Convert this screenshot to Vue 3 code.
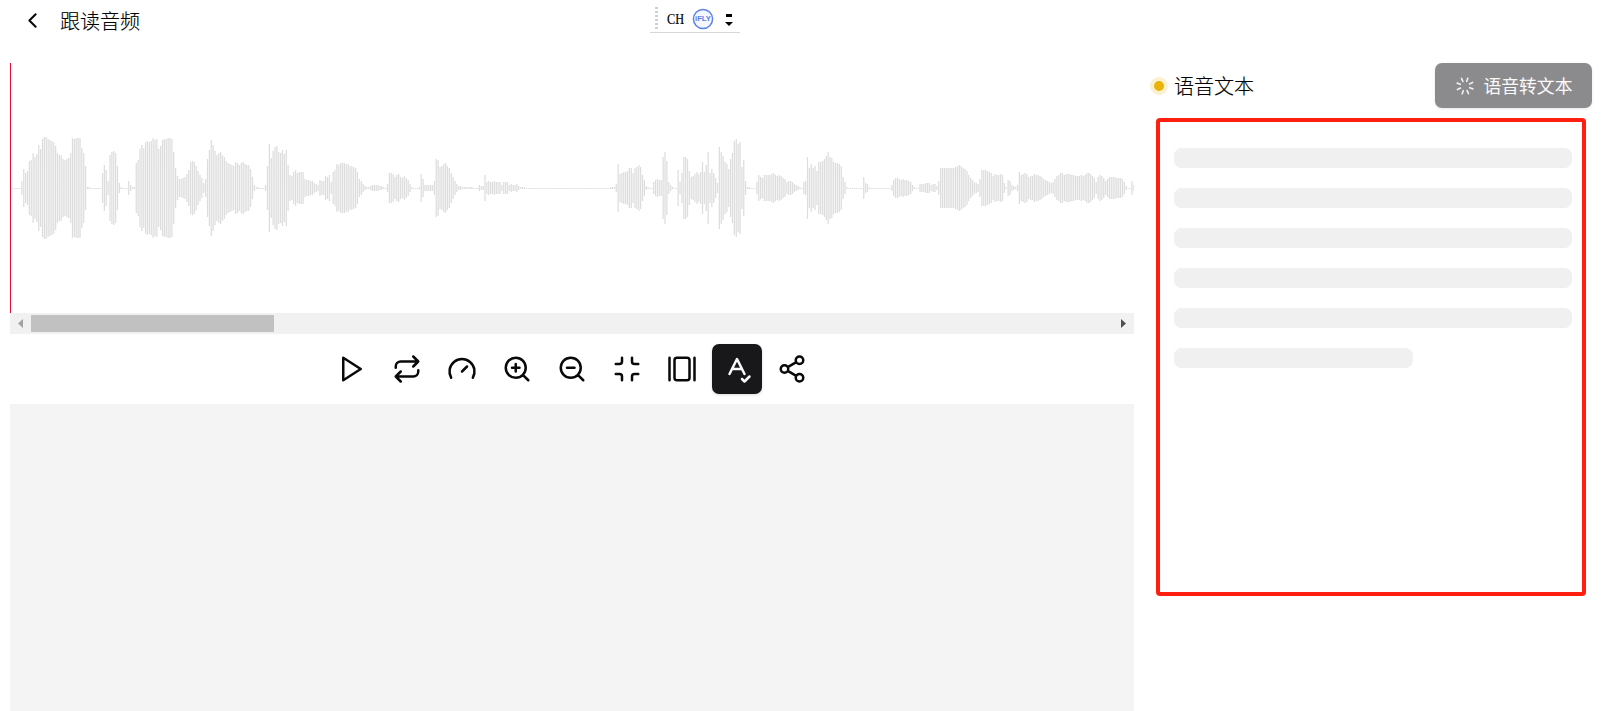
<script setup>
const PITCH = 1.875
const ORIGIN = 10

// Each run: page x of its first bar, then half-heights of successive bars.
const runs = [
  [21.25, [7,19,15,17,27,28,35,31,34,43,39,49,51,51,49,48,47,46,42,35,33,33,29,28,29,30,35,50,49,50,50,50,40,35,22,1,1]],
  [101.875, [15,23,18,7,33,36,37,35,22,5,1]],
  [128.125, [7,3,1,1]],
  [135.625, [25,28,39,43,40,46,47,46,47,50,48,49,39,42,48,49,49,50,50,49,36,20,12,9,9,10,11,14,18,26,27,26,22,17,13,10,5,9,29,38,48,43,37,33,35,36,33,31,27,25,24,23,22,26,25,23,25,26,24,23,23,19,11,3,1,1,0,0,0,3,22,44,30,37,41,42,36,35,38,34,38,23]],
  [289.375, [13,12,16,18,15,16,16,16,9,8,8,7,7,5,4,3,8,7,7,12,11,13,6,16,18,24,23,25,25,25,24,24,22,22,21,20,16,9,7,4,2,1,1,2,3,3,3,3,2,2,1,0,4,15,15,14,11,13,14,11,10,12,10,8,4,1,0,0,0,1,14,9,3,3,3,3,3,7,29,28,21,22,24,25,22,20,15,11,7,4,2,2,1,1,1,1,1,1,0,0,0,3,2,2,13,6,7,6,6,7,6,6,6,3,6,6,6,3,4,3,3,4,2,1,1,1]],
  [610, [1,1,1,4,24,14,15,16,16,17,20,20,15,20,21,23,21,13,8,2,1,0,0,6,8,9,8,8,31,36,27,6,3,1,0,0,18,6,15,31,31,29,17,11,12,14,16,14,16,26,16,23,36,15,19,15,10,5,41,36,32,26,24,19,29,35,47,49,44,46,21,28,7,1,1,0,0,0,6,13,11,10,13,13,13,13,14,15,13,12,13,12,10,9,6,7,7,6,4,3,2,1,0,6,7,31,20,24,20,22,17,26,26,27,29,32,36,31,30,26,25,25,24,22,11,6,1]],
  [863.125, [11,5,4,1]],
  [891.25, [3,8,10,10,9,8,9,8,8,7,6,3,1,0,0,4,4,4,5,5,5,3,4,4,2,7,20,20,20,20,20,20,20,20,21,22,23,22,20,19,17,13,10,8,6,5,4,9,18,18,18,17,16,15,12,14,13,13,14,13,5,1,8,7,3,2,1,3,16,13,14,15,14,11,12,12,14,13,13,12,11,9,8,7,6,5,6,9,12,13,15,15,13,14,14,14,13,13,12,12,12,13,12,13,15,15,14,12,10,6,11,13,12,10,7,9,11,11,11,11,10,10,10,9,6,2,0,0,7,3]],
]

const heights = new Array(600).fill(0)
for (const [x, list] of runs) {
  const first = Math.round((x - ORIGIN) / PITCH)
  list.forEach((h, i) => {
    if (first + i < 600) heights[first + i] = h
  })
}
const wavePath = heights
  .map((h, i) => {
    const top = 125 - h
    const height = h ? h * 2 : 1
    return `M${i * PITCH} ${top}h1.25v${height}h-1.25z`
  })
  .join('')

const tools = [
  { name: 'play', d: 'M5 3l14 9-14 9z' },
  { name: 'repeat', d: 'm17 2 4 4-4 4M3 11v-1a4 4 0 0 1 4-4h14M7 22l-4-4 4-4M21 13v1a4 4 0 0 1-4 4H3' },
  { name: 'speed', d: 'm12 14 4-4M3.34 19a10 10 0 1 1 17.32 0' },
  { name: 'zoom-in', d: 'M3 11a8 8 0 1 0 16 0a8 8 0 1 0-16 0M21 21l-4.35-4.35M11 8v6M8 11h6' },
  { name: 'zoom-out', d: 'M3 11a8 8 0 1 0 16 0a8 8 0 1 0-16 0M21 21l-4.35-4.35M8 11h6' },
  { name: 'minimize', d: 'M8 3v3a2 2 0 0 1-2 2H3M21 8h-3a2 2 0 0 1-2-2V3M3 16h3a2 2 0 0 1 2 2v3M16 21v-3a2 2 0 0 1 2-2h3' },
  { name: 'gallery', d: 'M2 3v18M22 3v18M8 3h8a2 2 0 0 1 2 2v14a2 2 0 0 1-2 2H8a2 2 0 0 1-2-2V5a2 2 0 0 1 2-2z' },
  { name: 'spell-check', active: true, d: 'm6 16 6-12 6 12M8 12h8M16 20l2 2 4-4' },
  { name: 'share', d: 'M15 5a3 3 0 1 0 6 0a3 3 0 1 0-6 0M3 12a3 3 0 1 0 6 0a3 3 0 1 0-6 0M15 19a3 3 0 1 0 6 0a3 3 0 1 0-6 0M8.59 13.51l6.83 3.98M15.41 6.51l-6.82 3.98' },
]
</script>

<template>
  <div class="page">
    <header class="header">
      <svg class="back" viewBox="0 0 24 24"><path d="m15 18-6-6 6-6" /></svg>
      <h1 class="title">跟读音频</h1>
    </header>

    <div class="ime">
      <span class="grip"></span>
      <svg class="lang" viewBox="0 0 21 22"><text x="2" y="15.5" textLength="17" lengthAdjust="spacingAndGlyphs">CH</text></svg>
      <svg class="fly" viewBox="0 0 22 22">
        <circle cx="11" cy="11" r="9.6" />
        <text x="11" y="13.4" text-anchor="middle" textLength="16" lengthAdjust="spacingAndGlyphs">iFLY</text>
      </svg>
      <svg class="menu" viewBox="0 0 8 16"><path d="M1 2h6v3H1zM0 10h8l-4 4z" /></svg>
    </div>

    <main class="main">
      <section class="left">
        <div class="wave">
          <svg class="bars" viewBox="0 0 1124 250"><path :d="wavePath" /></svg>
        </div>
        <div class="scrollbar">
          <svg class="arrow prev" viewBox="0 0 5 9"><path d="M5 0v9L0 4.5z" /></svg>
          <span class="track"><span class="thumb"></span></span>
          <svg class="arrow next" viewBox="0 0 5 9"><path d="M0 0v9l5-4.5z" /></svg>
        </div>
        <nav class="toolbar">
          <button v-for="t in tools" :key="t.name" :class="['tool', { active: t.active }]" :aria-label="t.name">
            <svg viewBox="0 0 24 24"><path :d="t.d" /></svg>
          </button>
        </nav>
        <div class="panel"></div>
      </section>

      <aside class="right">
        <div class="bar">
          <span class="dot"></span>
          <h2 class="subtitle">语音文本</h2>
          <button class="convert">
            <svg class="loader" viewBox="0 0 24 24">
              <path transform="rotate(20 12 12)" d="M12 2v4M12 18v4M4.93 4.93l2.83 2.83M16.24 16.24l2.83 2.83M2 12h4M18 12h4M4.93 19.07l2.83-2.83M16.24 7.76l2.83-2.83" />
            </svg>
            <span>语音转文本</span>
          </button>
        </div>
        <div class="result">
          <span v-for="n in 6" :key="n" class="line"></span>
        </div>
      </aside>
    </main>
  </div>
</template>

<style>
body { margin: 0; background: #fff; }
</style>

<style scoped>
.page {
  position: relative;
  box-sizing: border-box;
  width: 100%;
  height: 711px;
  overflow: hidden;
  display: flex;
  flex-direction: column;
  background: #fff;
  color: #09090b;
  font-family: "Noto Sans CJK SC", sans-serif;
}
svg { display: block; flex: none; }
.header {
  height: 41px;
  margin-bottom: 22px;
  padding-left: 20px;
  display: flex;
  align-items: center;
  gap: 15px;
}
.back, .tool svg, .loader {
  fill: none;
  stroke: currentColor;
  stroke-width: 2;
  stroke-linecap: round;
  stroke-linejoin: round;
}
.back { width: 25px; height: 25px; }
.title, .subtitle {
  margin: 0;
  font-size: 20px;
  line-height: 30px;
  font-weight: 300;
  color: #000;
  -webkit-text-stroke: 0.15px #000;
}
.ime {
  position: absolute;
  left: 650px;
  top: 0;
  width: 90px;
  height: 32px;
  border-bottom: 1px solid #d8d8d8;
  display: flex;
  align-items: center;
}
.grip {
  width: 3px;
  height: 24px;
  margin: 5px 7px 0 5px;
  background: repeating-linear-gradient(#d0d0d0 0 2px, #fff 2px 4px);
}
.lang { width: 21px; height: 22px; margin-top: 6px; overflow: visible; }
.lang text { font: 15px "Liberation Serif", serif; fill: #000; stroke: #000; stroke-width: 0.2px; }
.fly { width: 22px; height: 22px; margin: 6px 0 0 6px; }
.fly circle { fill: #f4f7ff; stroke: #5f81ea; stroke-width: 1.5; }
.fly text { font: bold 7px "Liberation Sans", sans-serif; fill: #5a7de8; }
.menu { width: 8px; height: 16px; margin: 8px 0 0 11px; fill: #000; }
.main {
  flex: 1;
  min-height: 0;
  display: flex;
  padding: 0 19px 0 10px;
  gap: 16px;
}
.left {
  width: 1124px;
  flex: none;
  display: flex;
  flex-direction: column;
}
.wave {
  height: 250px;
  box-sizing: border-box;
  position: relative;
}
.wave::before {
  content: "";
  position: absolute;
  left: 0;
  top: 0;
  width: 1px;
  height: 250px;
  background: #e60b3d;
}
.bars { width: 1124px; height: 250px; fill: #ddd; }
.scrollbar {
  height: 21px;
  display: flex;
  align-items: center;
  background: #f1f1f1;
}
.arrow { width: 5px; height: 9px; }
.prev { fill: #a3a3a3; margin: 0 8px; }
.next { fill: #505050; margin: 0 8px; }
.track { flex: 1; display: flex; }
.thumb { width: 243px; height: 17px; background: #c1c1c1; }
.toolbar {
  height: 70px;
  display: flex;
  justify-content: center;
  align-items: center;
  gap: 5px;
}
.tool {
  width: 50px;
  height: 50px;
  padding: 0;
  border: 0;
  border-radius: 7px;
  background: none;
  color: #09090b;
  display: flex;
  align-items: center;
  justify-content: center;
}
.tool svg { width: 30px; height: 30px; }
.tool.active {
  background: #18181b;
  color: #fafafa;
  box-shadow: 0 1px 3px rgba(0, 0, 0, 0.15);
}
.panel { flex: 1; background: #f4f4f4; }
.right { flex: 1; min-width: 0; }
.bar { height: 45px; display: flex; align-items: center; }
.dot {
  width: 10px;
  height: 10px;
  border: 4px solid #fbf0cf;
  border-radius: 50%;
  background: #eab308;
  margin-right: 6px;
}
.convert {
  margin-left: auto;
  width: 157px;
  height: 45px;
  padding: 0 19px 0 20px;
  box-sizing: border-box;
  border: 0;
  border-radius: 7px;
  background: #8b8b8d;
  color: #fafafa;
  display: flex;
  align-items: center;
  gap: 8.5px;
  font: 400 17.8px/25px "Noto Sans CJK SC", sans-serif;
  white-space: nowrap;
  box-shadow: 0 1px 3px rgba(0, 0, 0, 0.1);
}
.loader { width: 20px; height: 20px; opacity: 0.9; }
.result {
  box-sizing: border-box;
  width: 430px;
  height: 478px;
  margin: 10px 0 0 6px;
  padding: 26px 10px 0 14px;
  border: 4px solid #ff1f11;
  border-radius: 4px;
  display: flex;
  flex-direction: column;
  gap: 20px;
}
.line { height: 20px; border-radius: 7.5px; background: #f0f0f0; }
.line:last-child { width: 60%; }
</style>
